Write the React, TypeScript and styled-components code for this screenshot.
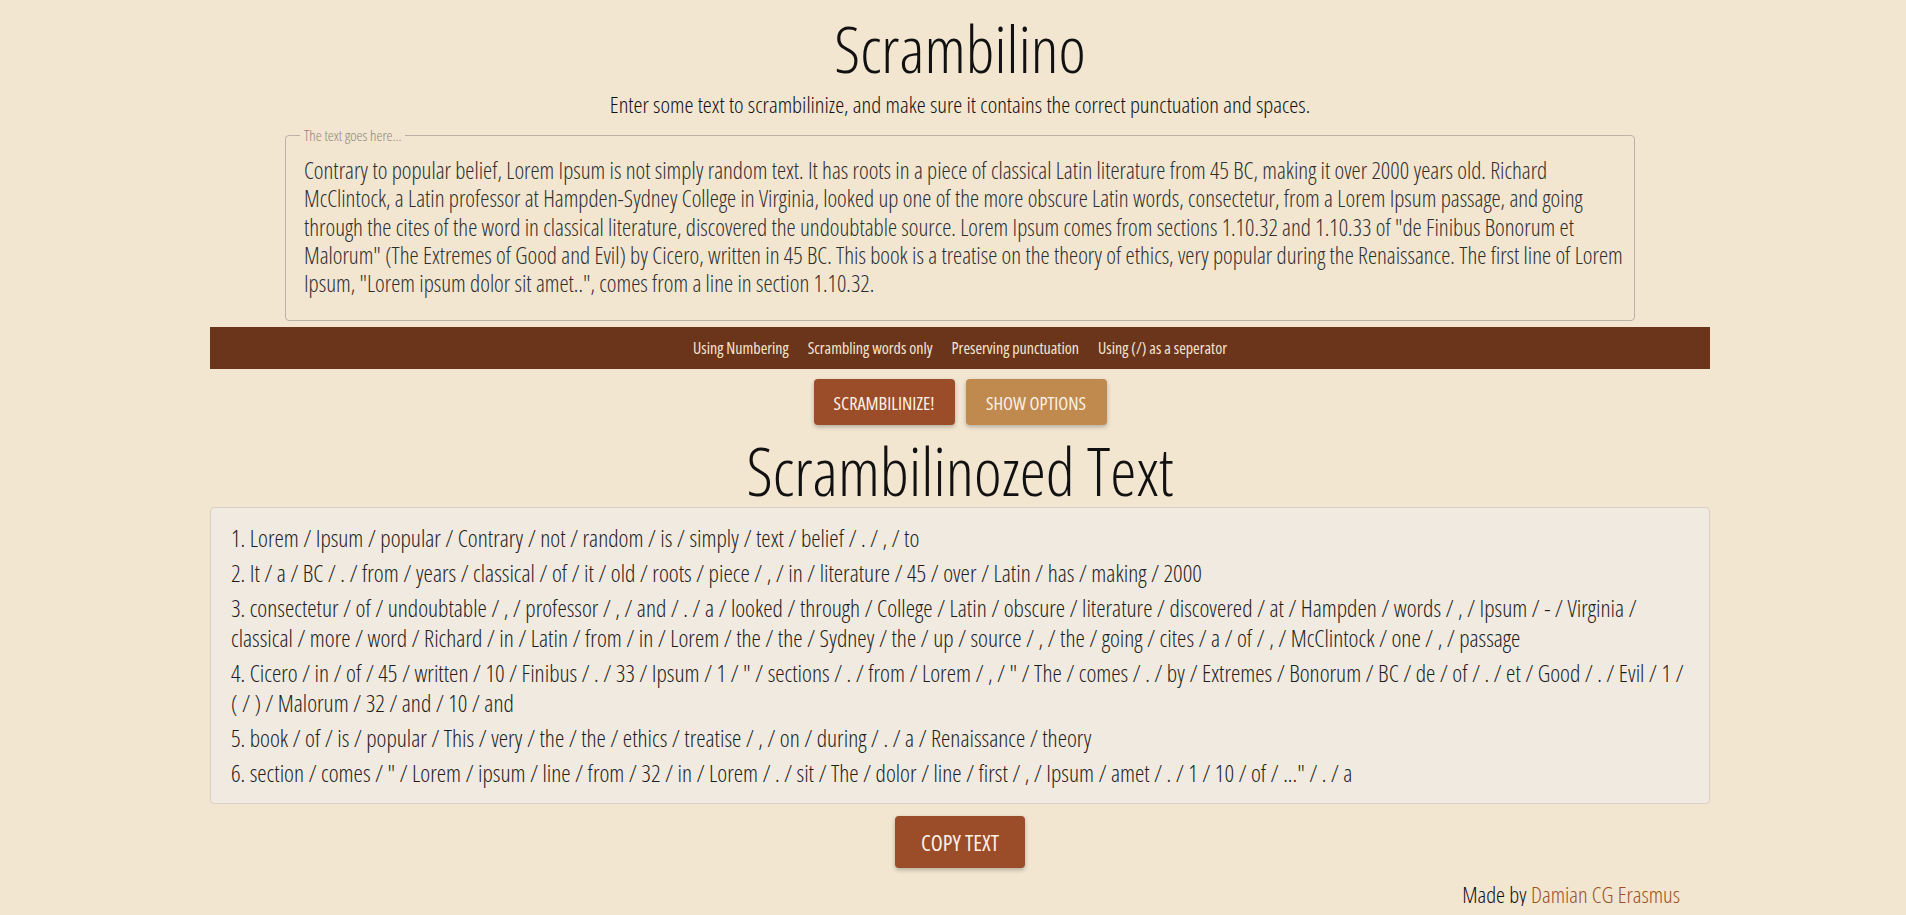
import React from "react";
import styled, { createGlobalStyle } from "styled-components";

const FONT = `"Open Sans", "Lato", "DejaVu Sans", sans-serif`;

const GlobalStyle = createGlobalStyle`
  html, body { margin: 0; padding: 0; }
  body {
    background: #f2e6d1;
    font-family: ${FONT};
    font-stretch: 75%;
    font-weight: 300;
    color: #1f1f1f;
    overflow: hidden;
  }
`;

const Page = styled.div`
  padding-left: 14px;
`;

const Container = styled.main`
  width: 1500px;
  margin: 0 auto;
  display: flex;
  flex-direction: column;
  align-items: center;
`;

const Title = styled.h1`
  margin: 13px 0 0;
  font-size: 65px;
  font-weight: 300;
  line-height: 70px;
  color: #111;
`;

const Subtitle = styled.p`
  margin: 10px 0 0;
  font-size: 22.75px;
  line-height: 24px;
  font-weight: 300;
  color: #111;
`;

const Field = styled.fieldset`
  box-sizing: border-box;
  width: 1350px;
  margin: 11px 0 0;
  padding: 0 6px 0 18px;
  border: 1px solid #bab1a2;
  border-radius: 4px;
  height: 193px;
`;

const Legend = styled.legend`
  font-size: 15px;
  font-weight: 300;
  color: #8b857b;
  padding: 0 4px;
  margin-left: -4px;
  line-height: 14px;
`;

const TextArea = styled.textarea`
  display: block;
  box-sizing: border-box;
  width: 100%;
  height: 160px;
  margin-top: 14px;
  padding: 0;
  border: none;
  outline: none;
  resize: none;
  overflow: hidden;
  background: transparent;
  font-family: ${FONT};
  font-stretch: 75%;
  font-weight: 300;
  font-size: 23.1px;
  line-height: 28.3px;
  color: #2e2e2e;
`;

const OptionBar = styled.div`
  width: 100%;
  height: 42px;
  margin-top: 6px;
  background: #6b351c;
  display: flex;
  justify-content: center;
  align-items: center;
  gap: 19px;
`;

const OptionItem = styled.span`
  font-size: 16px;
  font-weight: 400;
  color: #f4e6cf;
`;

const ButtonRow = styled.div`
  display: flex;
  gap: 11px;
  margin-top: 10px;
`;

const Button = styled.button<{ $variant?: "primary" | "secondary"; $large?: boolean }>`
  font-family: ${FONT};
  font-stretch: 75%;
  font-weight: 400;
  font-size: ${(p) => (p.$large ? "22px" : "18.3px")};
  color: #fbf1e6;
  text-transform: uppercase;
  border: none;
  border-radius: 4px;
  cursor: pointer;
  padding: 0;
  width: ${(p) => (p.$large ? "130px" : "141px")};
  height: ${(p) => (p.$large ? "52px" : "46px")};
  background: ${(p) => (p.$variant === "secondary" ? "#c0894d" : "#9b4c28")};
  box-shadow: 0 2px 4px rgba(0, 0, 0, 0.25);
`;

const SectionTitle = styled.h2`
  margin: 13px 0 0;
  font-size: 66px;
  line-height: 64px;
  font-weight: 300;
  color: #111;
`;

const ResultBox = styled.div`
  box-sizing: border-box;
  width: 100%;
  margin-top: 5px;
  padding: 10px 22px 10px 20px;
  background: #f1eae0;
  border: 1px solid #d9d1c5;
  border-radius: 4px;
`;

const ResultLine = styled.p`
  margin: 5px 0;
  font-size: 23.6px;
  font-weight: 300;
  line-height: 30px;
  color: #1e1e1e;
`;

const CopyRow = styled.div`
  margin-top: 12px;
`;

const Footer = styled.footer`
  width: 100%;
  box-sizing: border-box;
  padding-right: 30px;
  margin-top: 15px;
  text-align: right;
  font-size: 22.6px;
  line-height: 23px;
  font-weight: 300;
  color: #111;
`;

const Link = styled.a`
  color: #9c5026;
  text-decoration: underline;
  text-decoration-color: #cf9d7e;
  text-decoration-thickness: 2px;
  text-underline-offset: 3px;
`;

const sourceText =
  'Contrary to popular belief, Lorem Ipsum is not simply random text. It has roots in a piece of classical Latin literature from 45 BC, making it over 2000 years old. Richard McClintock, a Latin professor at Hampden-Sydney College in Virginia, looked up one of the more obscure Latin words, consectetur, from a Lorem Ipsum passage, and going through the cites of the word in classical literature, discovered the undoubtable source. Lorem Ipsum comes from sections 1.10.32 and 1.10.33 of "de Finibus Bonorum et Malorum" (The Extremes of Good and Evil) by Cicero, written in 45 BC. This book is a treatise on the theory of ethics, very popular during the Renaissance. The first line of Lorem Ipsum, "Lorem ipsum dolor sit amet..", comes from a line in section 1.10.32.';

const results = [
  "Lorem / Ipsum / popular / Contrary / not / random / is / simply / text / belief / . / , / to",
  "It / a / BC / . / from / years / classical / of / it / old / roots / piece / , / in / literature / 45 / over / Latin / has / making / 2000",
  "consectetur / of / undoubtable / , / professor / , / and / . / a / looked / through / College / Latin / obscure / literature / discovered / at / Hampden / words / , / Ipsum / - / Virginia / classical / more / word / Richard / in / Latin / from / in / Lorem / the / the / Sydney / the / up / source / , / the / going / cites / a / of / , / McClintock / one / , / passage",
  'Cicero / in / of / 45 / written / 10 / Finibus / . / 33 / Ipsum / 1 / " / sections / . / from / Lorem / , / " / The / comes / . / by / Extremes / Bonorum / BC / de / of / . / et / Good / . / Evil / 1 / ( / ) / Malorum / 32 / and / 10 / and',
  "book / of / is / popular / This / very / the / the / ethics / treatise / , / on / during / . / a / Renaissance / theory",
  'section / comes / " / Lorem / ipsum / line / from / 32 / in / Lorem / . / sit / The / dolor / line / first / , / Ipsum / amet / . / 1 / 10 / of / ..." / . / a',
];

const options = [
  "Using Numbering",
  "Scrambling words only",
  "Preserving punctuation",
  "Using (/) as a seperator",
];

export default function App() {
  return (
    <Page>
      <GlobalStyle />
      <Container>
        <Title>Scrambilino</Title>
        <Subtitle>
          Enter some text to scrambilinize, and make sure it contains the correct punctuation and spaces.
        </Subtitle>
        <Field>
          <Legend>The text goes here...</Legend>
          <TextArea defaultValue={sourceText} spellCheck={false} />
        </Field>
        <OptionBar>
          {options.map((o) => (
            <OptionItem key={o}>{o}</OptionItem>
          ))}
        </OptionBar>
        <ButtonRow>
          <Button $variant="primary">Scrambilinize!</Button>
          <Button $variant="secondary">Show Options</Button>
        </ButtonRow>
        <SectionTitle>Scrambilinozed Text</SectionTitle>
        <ResultBox>
          {results.map((r, i) => (
            <ResultLine key={i}>
              {i + 1}. {r}
            </ResultLine>
          ))}
        </ResultBox>
        <CopyRow>
          <Button $variant="primary" $large>
            Copy Text
          </Button>
        </CopyRow>
        <Footer>
          Made by <Link href="#">Damian CG Erasmus</Link>
        </Footer>
      </Container>
    </Page>
  );
}
